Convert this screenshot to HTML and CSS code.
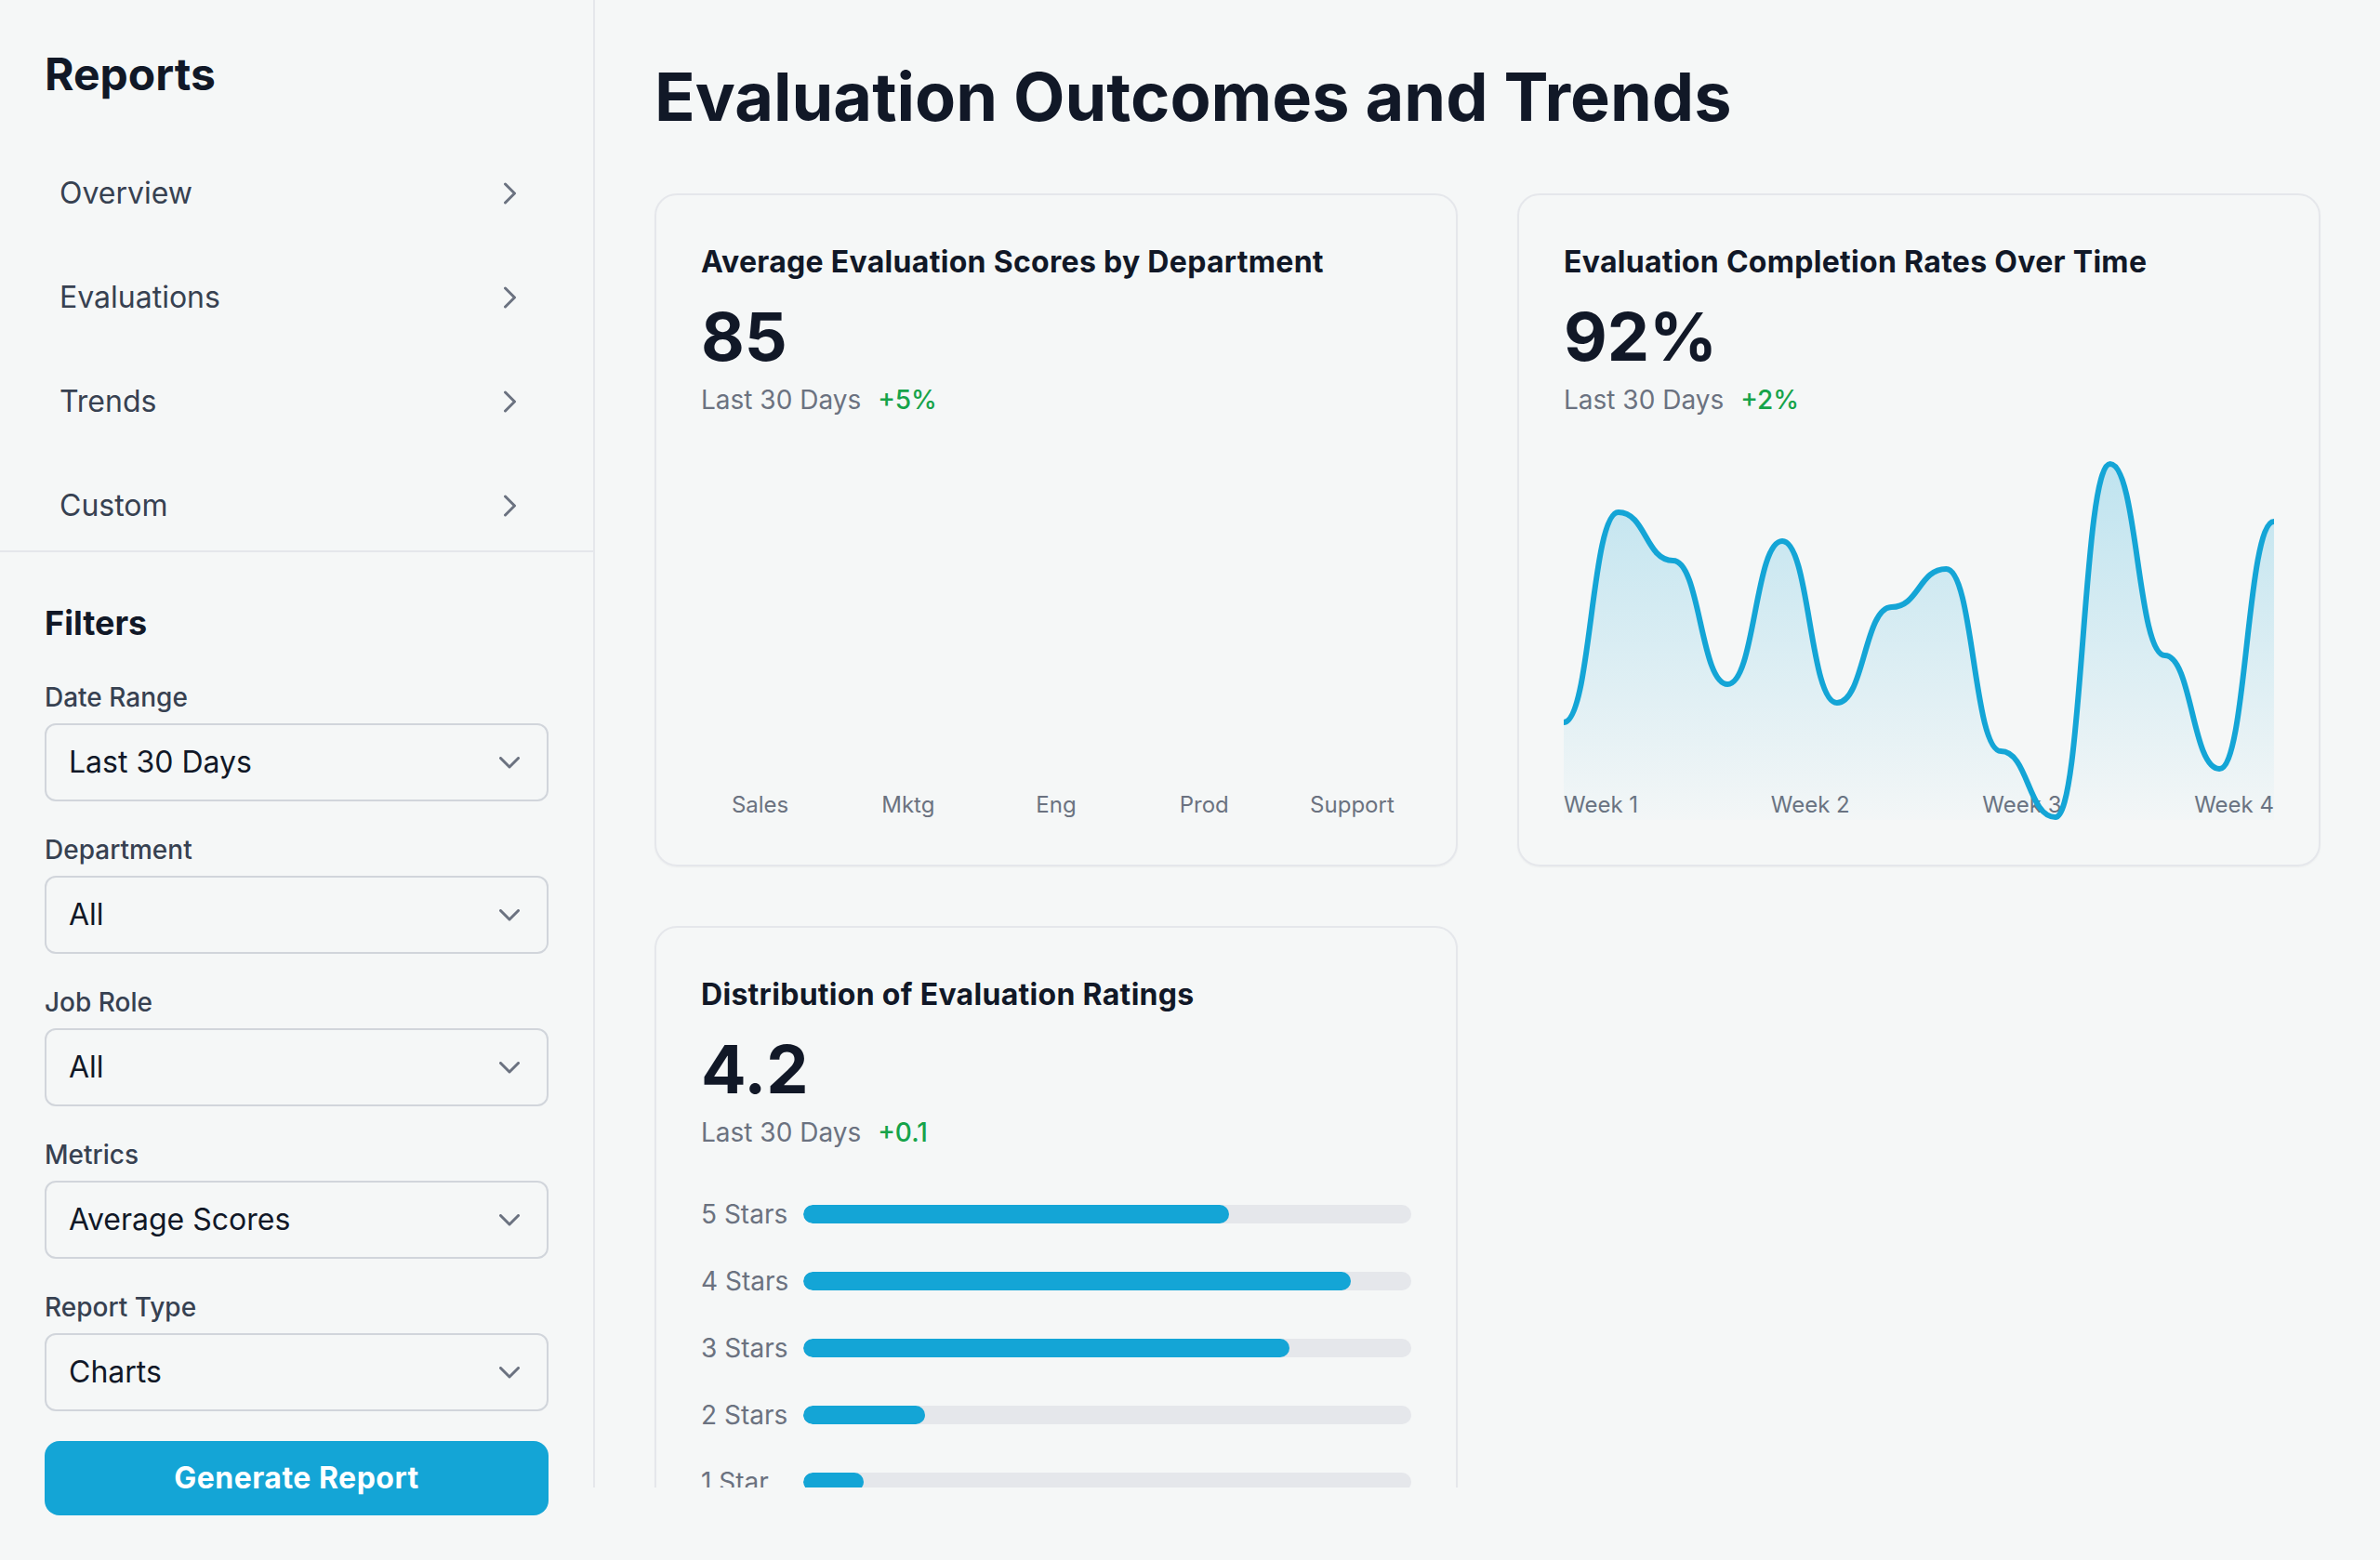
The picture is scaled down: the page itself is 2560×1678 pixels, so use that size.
FILE: index.html
```html
<!DOCTYPE html>
<html lang="en">
<head>
<meta charset="utf-8">
<title>Evaluation Outcomes and Trends</title>
<link rel="stylesheet" href="styles.css">
</head>
<body>
<div class="app">
  <aside class="sidebar">
    <div class="side-top">
      <h1 class="side-title">Reports</h1>
      <nav class="nav">
        <a class="nav-item" href="#"><span>Overview</span><svg class="nav-chev" viewBox="0 0 16 24" width="16" height="24"><polyline points="2.5,2 12.5,12 2.5,22"/></svg></a>
        <a class="nav-item" href="#"><span>Evaluations</span><svg class="nav-chev" viewBox="0 0 16 24" width="16" height="24"><polyline points="2.5,2 12.5,12 2.5,22"/></svg></a>
        <a class="nav-item" href="#"><span>Trends</span><svg class="nav-chev" viewBox="0 0 16 24" width="16" height="24"><polyline points="2.5,2 12.5,12 2.5,22"/></svg></a>
        <a class="nav-item" href="#"><span>Custom</span><svg class="nav-chev" viewBox="0 0 16 24" width="16" height="24"><polyline points="2.5,2 12.5,12 2.5,22"/></svg></a>
      </nav>
    </div>
    <div class="filters">
      <h2 class="filters-title">Filters</h2>
      <div class="field">
        <label class="field-label">Date Range</label>
        <div class="select"><span>Last 30 Days</span><svg class="sel-chev" viewBox="0 0 22 13" width="22" height="13"><polyline points="1.5,1.5 11,11 20.5,1.5"/></svg></div>
      </div>
      <div class="field">
        <label class="field-label">Department</label>
        <div class="select"><span>All</span><svg class="sel-chev" viewBox="0 0 22 13" width="22" height="13"><polyline points="1.5,1.5 11,11 20.5,1.5"/></svg></div>
      </div>
      <div class="field">
        <label class="field-label">Job Role</label>
        <div class="select"><span>All</span><svg class="sel-chev" viewBox="0 0 22 13" width="22" height="13"><polyline points="1.5,1.5 11,11 20.5,1.5"/></svg></div>
      </div>
      <div class="field">
        <label class="field-label">Metrics</label>
        <div class="select"><span>Average Scores</span><svg class="sel-chev" viewBox="0 0 22 13" width="22" height="13"><polyline points="1.5,1.5 11,11 20.5,1.5"/></svg></div>
      </div>
      <div class="field">
        <label class="field-label">Report Type</label>
        <div class="select"><span>Charts</span><svg class="sel-chev" viewBox="0 0 22 13" width="22" height="13"><polyline points="1.5,1.5 11,11 20.5,1.5"/></svg></div>
      </div>
      <button class="btn" type="button">Generate Report</button>
    </div>
  </aside>

  <main class="main">
    <h1 class="page-title">Evaluation Outcomes and Trends</h1>
    <div class="grid">
      <section class="card">
        <h3 class="card-title">Average Evaluation Scores by Department</h3>
        <div class="metric">85</div>
        <div class="sub">Last 30 Days <span class="delta">+5%</span></div>
        <div class="bar-chart">
          <div class="bar-col"><div class="bar"></div><span class="axis-label">Sales</span></div>
          <div class="bar-col"><div class="bar"></div><span class="axis-label">Mktg</span></div>
          <div class="bar-col"><div class="bar"></div><span class="axis-label">Eng</span></div>
          <div class="bar-col"><div class="bar"></div><span class="axis-label">Prod</span></div>
          <div class="bar-col"><div class="bar"></div><span class="axis-label">Support</span></div>
        </div>
      </section>

      <section class="card">
        <h3 class="card-title">Evaluation Completion Rates Over Time</h3>
        <div class="metric">92%</div>
        <div class="sub">Last 30 Days <span class="delta">+2%</span></div>
        <div class="line-chart">
          <div class="week-labels">
            <span class="axis-label">Week 1</span>
            <span class="axis-label">Week 2</span>
            <span class="axis-label">Week 3</span>
            <span class="axis-label">Week 4</span>
          </div>
          <svg class="line-svg" viewBox="0 0 764 400" preserveAspectRatio="none">
            <defs>
              <linearGradient id="areaFill" x1="0" y1="0" x2="0" y2="1">
                <stop offset="0" stop-color="#14a5d6" stop-opacity="0.24"/>
                <stop offset="1" stop-color="#14a5d6" stop-opacity="0.01"/>
              </linearGradient>
            </defs>
            <path class="area" d="M0,295 C29.38,295 29.38,69 58.77,69 C88.15,69 88.15,121 117.54,121 C146.92,121 146.92,254 176.31,254 C205.69,254 205.69,100 235.08,100 C264.46,100 264.46,274 293.85,274 C323.23,274 323.23,171 352.62,171 C382,171 382,130 411.38,130 C440.77,130 440.77,326 470.15,326 C499.54,326 499.54,397 528.92,397 C558.31,397 558.31,17 587.69,17 C617.08,17 617.08,223 646.46,223 C675.85,223 675.85,345 705.23,345 C734.62,345 734.62,79 764,79 L764,400 L0,400 Z"/>
            <path class="line" d="M0,295 C29.38,295 29.38,69 58.77,69 C88.15,69 88.15,121 117.54,121 C146.92,121 146.92,254 176.31,254 C205.69,254 205.69,100 235.08,100 C264.46,100 264.46,274 293.85,274 C323.23,274 323.23,171 352.62,171 C382,171 382,130 411.38,130 C440.77,130 440.77,326 470.15,326 C499.54,326 499.54,397 528.92,397 C558.31,397 558.31,17 587.69,17 C617.08,17 617.08,223 646.46,223 C675.85,223 675.85,345 705.23,345 C734.62,345 734.62,79 764,79"/>
          </svg>
        </div>
      </section>

      <section class="card">
        <h3 class="card-title">Distribution of Evaluation Ratings</h3>
        <div class="metric">4.2</div>
        <div class="sub">Last 30 Days <span class="delta">+0.1</span></div>
        <div class="dist">
          <div class="dist-row"><span class="dist-label">5 Stars</span><div class="track"><div class="fill" style="width:70%"></div></div></div>
          <div class="dist-row"><span class="dist-label">4 Stars</span><div class="track"><div class="fill" style="width:90%"></div></div></div>
          <div class="dist-row"><span class="dist-label">3 Stars</span><div class="track"><div class="fill" style="width:80%"></div></div></div>
          <div class="dist-row"><span class="dist-label">2 Stars</span><div class="track"><div class="fill" style="width:20%"></div></div></div>
          <div class="dist-row"><span class="dist-label">1 Star</span><div class="track"><div class="fill" style="width:10%"></div></div></div>
        </div>
      </section>
    </div>
  </main>
</div>
</body>
</html>
```

FILE: styles.css
```css
* { box-sizing: border-box; }

html, body {
  margin: 0;
  padding: 0;
  background: #f5f7f7;
  font-family: Inter, "Noto Sans", "Liberation Sans", sans-serif;
  color: #111827;
}

.app {
  display: flex;
  align-items: flex-start;
}

/* Sidebar */
.sidebar {
  width: 640px;
  flex-shrink: 0;
  padding-right: 2px;
  background: linear-gradient(#e5e7eb, #e5e7eb) right top / 2px 1600px no-repeat;
}

.side-top {
  padding: 48px 48px 0 48px;
}

.side-title {
  margin: 0 0 48px 0;
  font-size: 48px;
  line-height: 64px;
  font-weight: 700;
  color: #111827;
}

.nav {
  display: flex;
  flex-direction: column;
  gap: 16px;
}

.nav-item {
  display: flex;
  align-items: center;
  justify-content: space-between;
  padding: 24px 16px;
  font-size: 32px;
  line-height: 48px;
  color: #374151;
  text-decoration: none;
}

.nav-chev {
  margin-right: 17px;
  fill: none;
  stroke: #6b7280;
  stroke-width: 3;
  stroke-linecap: round;
  stroke-linejoin: round;
}

.filters {
  border-top: 2px solid #e5e7eb;
  padding: 48px;
}

.filters-title {
  margin: 0 0 32px 0;
  font-size: 36px;
  line-height: 56px;
  font-weight: 700;
  color: #111827;
}

.field {
  margin-bottom: 32px;
}

.field-label {
  display: block;
  margin-bottom: 8px;
  font-size: 28px;
  line-height: 40px;
  font-weight: 500;
  color: #374151;
}

.select {
  display: flex;
  align-items: center;
  justify-content: space-between;
  border: 2px solid #d1d5db;
  border-radius: 12px;
  padding: 16px 24px;
  font-size: 32px;
  line-height: 48px;
  color: #111827;
}

.sel-chev {
  margin-right: 5px;
  fill: none;
  stroke: #6b7280;
  stroke-width: 3;
  stroke-linecap: round;
  stroke-linejoin: round;
}

.btn {
  display: block;
  width: 100%;
  height: 80px;
  border: none;
  border-radius: 16px;
  background: #14a5d6;
  color: #ffffff;
  font-family: inherit;
  font-size: 32px;
  line-height: 48px;
  font-weight: 700;
  letter-spacing: 0.5px;
}

/* Main */
.main {
  flex: 1;
  min-width: 0;
  height: 1600px;
  padding: 64px;
  overflow: hidden;
}

.page-title {
  margin: 0 0 64px 0;
  font-size: 72px;
  line-height: 80px;
  font-weight: 700;
  color: #111827;
}

.grid {
  display: grid;
  grid-template-columns: 1fr 1fr;
  gap: 64px;
}

.card {
  border: 2px solid #e5e7eb;
  border-radius: 24px;
  padding: 48px;
  box-shadow: 0 1px 2px rgba(0, 0, 0, 0.04);
}

.card-title {
  margin: 0 0 16px 0;
  font-size: 32px;
  line-height: 48px;
  font-weight: 700;
  letter-spacing: 0.3px;
  color: #111827;
}

.metric {
  font-size: 72px;
  line-height: 80px;
  font-weight: 700;
  color: #111827;
}

.sub {
  margin-top: 8px;
  font-size: 28px;
  line-height: 40px;
  color: #6b7280;
}

.delta {
  margin-left: 10px;
  color: #16a34a;
  font-weight: 500;
}

.axis-label {
  font-size: 24px;
  line-height: 32px;
  color: #6b7280;
  white-space: nowrap;
}

.bar-chart {
  margin-top: 32px;
  height: 400px;
  display: flex;
  align-items: flex-end;
  gap: 32px;
}

.bar-col {
  flex: 1;
  display: flex;
  flex-direction: column;
  align-items: center;
}

.bar {
  width: 100%;
  height: 0;
  background: #14a5d6;
}

.line-chart {
  position: relative;
  margin-top: 32px;
  height: 400px;
}

.week-labels {
  position: absolute;
  left: 0;
  right: 0;
  bottom: 0;
  display: flex;
  justify-content: space-between;
}

.line-svg {
  position: absolute;
  left: 0;
  top: 0;
  width: 100%;
  height: 100%;
  overflow: visible;
}

.area {
  fill: url(#areaFill);
}

.line {
  fill: none;
  stroke: #14a5d6;
  stroke-width: 6;
}

.dist {
  margin-top: 48px;
  display: flex;
  flex-direction: column;
  gap: 32px;
}

.dist-row {
  display: flex;
  align-items: center;
  gap: 16px;
  height: 40px;
}

.dist-label {
  width: 94px;
  flex-shrink: 0;
  font-size: 28px;
  line-height: 40px;
  color: #6b7280;
  white-space: nowrap;
}

.track {
  flex: 1;
  height: 20px;
  border-radius: 10px;
  background: #e5e7eb;
  overflow: hidden;
}

.fill {
  height: 100%;
  border-radius: 10px;
  background: #14a5d6;
}
```
